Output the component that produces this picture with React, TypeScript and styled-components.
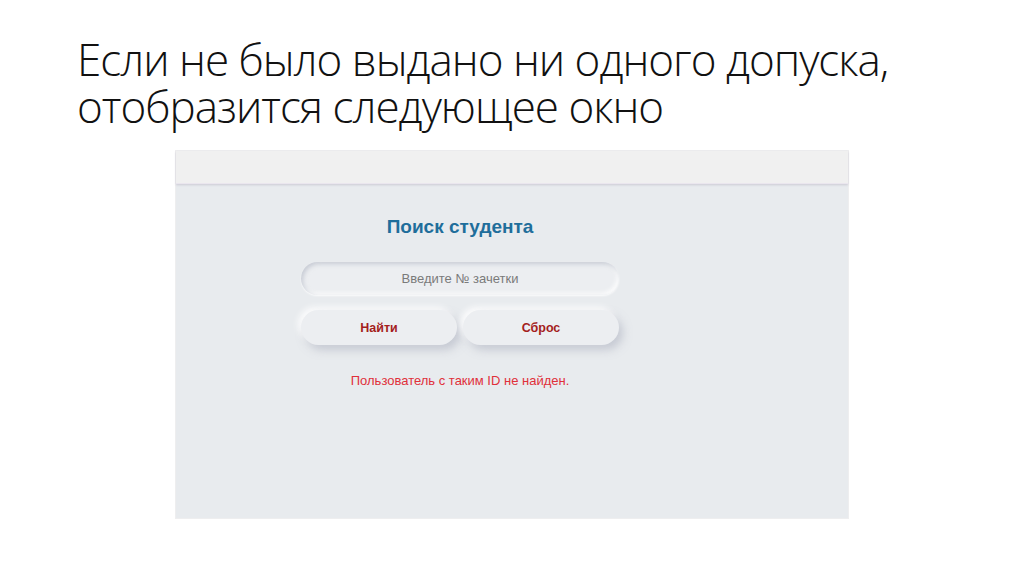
import React from 'react';
import styled, { createGlobalStyle } from 'styled-components';

const GlobalStyle = createGlobalStyle`
  html, body {
    margin: 0;
    padding: 0;
    background: #ffffff;
  }
`;

const Slide = styled.div`
  width: 1024px;
  height: 574px;
  box-sizing: border-box;
  padding: 36px 0 0 77px;
  display: flex;
  flex-direction: column;
  overflow: hidden;
`;

const SlideTitle = styled.h1`
  margin: 0;
  font-family: 'Open Sans', 'Liberation Sans', sans-serif;
  font-weight: 300;
  font-size: 44px;
  letter-spacing: -1px;
  line-height: 47px;
  color: #111;
`;

const Screenshot = styled.div`
  margin: 21px 0 0 99px;
  width: 672px;
  height: 367px;
  display: flex;
  flex-direction: column;
  background: #e8ebee;
  box-shadow: 0 0 0 1px #eeeeef;
`;

const TopBar = styled.div`
  height: 32px;
  background: #f0f0f0;
  border-bottom: 1px solid #eae6ee;
  box-shadow: 0 1px 2px rgba(170, 165, 185, 0.45);
  flex-shrink: 0;
`;

const Body = styled.div`
  padding: 32px 0 0 125px;
  display: flex;
  flex-direction: column;
  width: 318px;
  font-family: 'Liberation Sans', Arial, sans-serif;
`;

const FormTitle = styled.h2`
  margin: 0;
  text-align: center;
  font-size: 19px;
  font-weight: bold;
  color: #1f6e9b;
  line-height: 22px;
`;

const SearchInput = styled.input`
  margin-top: 24px;
  height: 33px;
  box-sizing: border-box;
  border: none;
  outline: none;
  border-radius: 17px;
  background: #eceef1;
  text-align: center;
  font-family: 'Liberation Sans', Arial, sans-serif;
  font-size: 13px;
  color: #555;
  box-shadow: inset 2px 2px 4px rgba(170, 175, 190, 0.55),
    inset -2px -2px 4px rgba(255, 255, 255, 0.9), 0 1px 2px rgba(255, 255, 255, 0.8);

  &::placeholder {
    color: #7a7a7a;
  }
`;

const ButtonRow = styled.div`
  margin-top: 15px;
  display: flex;
  gap: 6px;
`;

const Button = styled.button`
  flex: 1;
  height: 35px;
  border: none;
  border-radius: 18px;
  background: #eceef1;
  font-family: 'Liberation Sans', Arial, sans-serif;
  font-size: 12.5px;
  font-weight: bold;
  color: #a41d1d;
  box-shadow: 4px 5px 8px rgba(165, 170, 185, 0.5),
    -3px -3px 6px rgba(255, 255, 255, 0.9);
  cursor: pointer;
`;

const ErrorText = styled.p`
  margin: 28px 0 0;
  text-align: center;
  font-size: 13px;
  color: #e0303a;
`;

export default function App() {
  return (
    <>
      <GlobalStyle />
      <Slide>
        <SlideTitle>
          Если не было выдано ни одного допуска,
          <br />
          отобразится следующее окно
        </SlideTitle>
        <Screenshot>
          <TopBar />
          <Body>
            <FormTitle>Поиск студента</FormTitle>
            <SearchInput placeholder="Введите № зачетки" />
            <ButtonRow>
              <Button>Найти</Button>
              <Button>Сброс</Button>
            </ButtonRow>
            <ErrorText>Пользователь с таким ID не найден.</ErrorText>
          </Body>
        </Screenshot>
      </Slide>
    </>
  );
}
